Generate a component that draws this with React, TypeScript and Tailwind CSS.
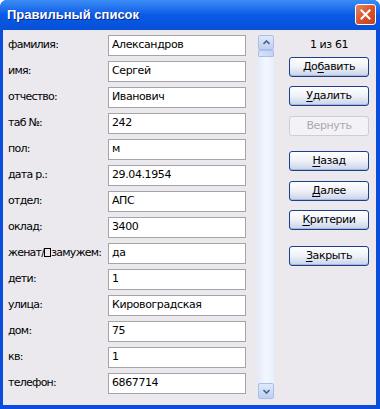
import React from 'react';

const Box = () => <span className="inline-block h-[9px] w-[7px] border border-black align-[-1px]" />;

const fields: [React.ReactNode, string][] = [
    ['фамилия:', 'Александров'],
    ['имя:', 'Сергей'],
    ['отчество:', 'Иванович'],
    ['таб №:', '242'],
    ['пол:', 'м'],
    ['дата р.:', '29.04.1954'],
    ['отдел:', 'АПС'],
    ['оклад:', '3400'],
    [<>женат/<Box />замужем:</>, 'да'],
    ['дети:', '1'],
    ['улица:', 'Кировоградская'],
    ['дом:', '75'],
    ['кв:', '1'],
    ['телефон:', '6867714'],
];

function XpButton({ pre, acc, post, mt, disabled }: { pre: string; acc: string; post: string; mt: string; disabled?: boolean }) {
    if (disabled) {
        return (
            <div className={`${mt} flex h-[20px] w-[80px] items-center justify-center rounded-[3px] border border-[#cfcdd6] bg-[#f3f2f6] text-[#aca8b2]`}>
                {pre}{acc}{post}
            </div>
        );
    }
    return (
        <div className={`${mt} flex h-[20px] w-[80px] items-center justify-center rounded-[3px] border border-[#1c3f8c] bg-gradient-to-b from-[#ffffff] via-[#eef1f8] to-[#c8d2e8] text-black shadow-[inset_0_-1px_0_#a9b8d8]`}>
            {pre}<span className="underline underline-offset-2">{acc}</span>{post}
        </div>
    );
}

export default function App() {
    return (
        <div className="flex h-[409px] w-[380px] flex-col overflow-hidden rounded-t-[7px] bg-[#0a4ddc] font-['DejaVu_Sans',Tahoma,sans-serif] text-[11px] tracking-[-0.4px] text-black">
            {/* Title bar */}
            <div className="flex h-[30px] shrink-0 items-center justify-between bg-gradient-to-b from-[#3c8cf5] via-[#0a5ae6] to-[#0650d8] pl-[7px] pr-[4px]">
                <span className="font-['Liberation_Sans',Arial,sans-serif] text-[13px] font-bold tracking-[0px] text-white [text-shadow:1px_1px_0_#0a2a8a]">Правильный список</span>
                <div className="mb-[1px] flex h-[21px] w-[21px] items-center justify-center rounded-[3px] border border-white bg-gradient-to-br from-[#e8875f] via-[#d9542c] to-[#c4401c]">
                    <svg width="11" height="11" viewBox="0 0 11 11">
                        <path d="M1.5 1.5 L9.5 9.5 M9.5 1.5 L1.5 9.5" stroke="white" strokeWidth="2" strokeLinecap="square" />
                    </svg>
                </div>
            </div>

            {/* Body */}
            <div className="mb-[4px] ml-[3px] mr-[4px] flex flex-1 bg-[#ebe9ee] pl-[5px] pt-[5px]">
                <div className="flex flex-col gap-[5px]">
                    {fields.map(([label, value], i) => (
                        <div key={i} className="flex h-[21px] items-center">
                            <span className="w-[100px] whitespace-nowrap tracking-[-0.75px]">{label}</span>
                            <div className="flex h-[21px] w-[138px] items-center border border-[#a5a5a8] bg-white pl-[3px]">
                                {value}
                            </div>
                        </div>
                    ))}
                </div>

                {/* Scrollbar */}
                <div className="ml-[12px] flex h-[364px] w-[16px] flex-col bg-gradient-to-r from-[#e3ebfb] via-[#f3f7fe] to-[#e8effc]">
                    <div className="flex h-[15px] items-center justify-center rounded-[2px] border border-[#a9bfe6] bg-gradient-to-b from-[#dfe9fb] to-[#bcd0f3]">
                        <svg width="7" height="5" viewBox="0 0 7 5">
                            <path d="M0.5 4 L3.5 1 L6.5 4" stroke="#4d6185" strokeWidth="1.6" fill="none" />
                        </svg>
                    </div>
                    <div className="h-[7px] rounded-[1px] border border-[#a9bfe6] bg-gradient-to-r from-[#d5e2fa] to-[#c2d4f4]" />
                    <div className="flex-1" />
                    <div className="flex h-[16px] items-center justify-center rounded-[2px] border border-[#a9bfe6] bg-gradient-to-b from-[#dfe9fb] to-[#bcd0f3]">
                        <svg width="7" height="5" viewBox="0 0 7 5">
                            <path d="M0.5 1 L3.5 4 L6.5 1" stroke="#4d6185" strokeWidth="1.6" fill="none" />
                        </svg>
                    </div>
                </div>

                {/* Buttons */}
                <div className="ml-[15px] flex flex-col">
                    <div className="mt-[3px] h-[13px] text-center leading-[13px]">1 из 61</div>
                    <XpButton mt="mt-[6px]" pre="До" acc="б" post="авить" />
                    <XpButton mt="mt-[9px]" pre="" acc="У" post="далить" />
                    <XpButton mt="mt-[10px]" pre="Вернуть" acc="" post="" disabled />
                    <XpButton mt="mt-[15px]" pre="" acc="Н" post="азад" />
                    <XpButton mt="mt-[10px]" pre="" acc="Д" post="алее" />
                    <XpButton mt="mt-[9px]" pre="" acc="К" post="ритерии" />
                    <XpButton mt="mt-[16px]" pre="" acc="З" post="акрыть" />
                </div>
            </div>
        </div>
    );
}
